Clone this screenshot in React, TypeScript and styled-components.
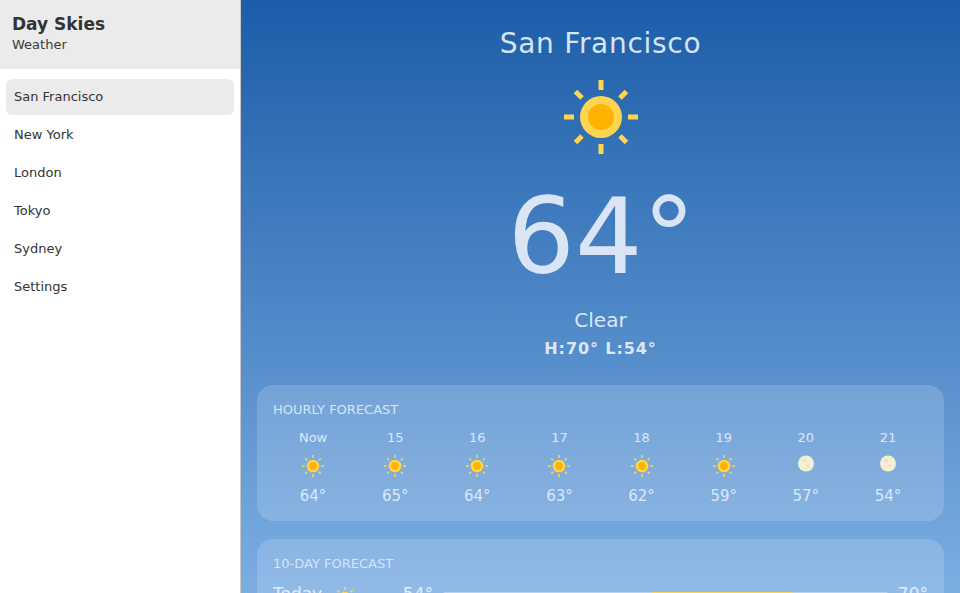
import React from 'react';
import styled, { createGlobalStyle } from 'styled-components';

const Global = createGlobalStyle`
  html, body { margin: 0; padding: 0; height: 100%; overflow: hidden; }
  body { font-family: "DejaVu Sans", Verdana, sans-serif; }
  * { box-sizing: border-box; }
`;
const Shell = styled.div`display: flex; width: 960px; height: 593px; overflow: hidden; background: #fff;`;
const Sidebar = styled.aside`width: 241px; flex: none; border-right: 1px solid #c8c8c8; background: #fff; display: flex; flex-direction: column;`;
const SideHeader = styled.header`height: 69px; background: #ebebeb; padding: 13px 12px 0;`;
const AppName = styled.div`font-size: 17px; font-weight: 700; color: #333; line-height: 22px;`;
const AppSub = styled.div`font-size: 13px; color: #3a3a3a; line-height: 20px;`;
const Nav = styled.nav`display: flex; flex-direction: column; gap: 2px; padding: 10px 6px;`;
const NavItem = styled.div<{ $active?: boolean }>`
  height: 36px; line-height: 36px; padding: 0 8px; font-size: 13px; color: #333; border-radius: 6px;
  background: ${p => (p.$active ? '#ebebeb' : 'transparent')};
`;
const Main = styled.main`
  flex: 1; min-width: 0; height: 593px; overflow: hidden; padding: 0 16px;
  background: linear-gradient(180deg, #1c5da8 0%, #7caee3 100%); color: #fff;
`;
const Hero = styled.section`display: flex; flex-direction: column; align-items: center; padding-top: 25px; height: 385px;`;
const City = styled.h1`margin: 0; font-size: 28px; font-weight: 400; line-height: 38px; color: #d6e4f5; letter-spacing: .7px;`;
const HeroIcon = styled.div`margin-top: 14px; height: 80px; line-height: 0;`;
const Temp = styled.div`font-size: 106px; line-height: 126px; color: #d9e5f4; margin-top: 17px; padding-left: 2px;`;
const Cond = styled.div`font-size: 20px; line-height: 26px; color: #d9e6f6; margin-top: 7px;`;
const HiLo = styled.div`font-size: 16px; font-weight: 700; line-height: 20px; color: #dbe7f6; margin-top: 6px; letter-spacing: .9px;`;
const Card = styled.section`background: rgba(255,255,255,.16); border-radius: 16px; padding: 16px 16px 15px; margin-bottom: 18px;`;
const CardTitle = styled.h2`margin: 0; font-size: 13px; font-weight: 400; line-height: 18px; color: #d6e4f6; text-transform: uppercase;`;
const Hours = styled.div`display: grid; grid-template-columns: repeat(8, 1fr); margin: 10px -1px 0;`;
const Hour = styled.div`display: flex; flex-direction: column; align-items: center;`;
const HourLabel = styled.div`font-size: 13px; line-height: 18px; color: #dbe7f6;`;
const HourIcon = styled.div`height: 24px; margin-top: 7px; line-height: 0;`;
const HourTemp = styled.div`font-size: 15px; line-height: 20px; color: #dbe7f6; margin-top: 8px;`;
const DayRow = styled.div`display: grid; grid-template-columns: 60px 28px 1fr 40px; align-items: center; height: 40px; margin-top: 1px;`;
const DayName = styled.div`font-size: 17px; color: #e1ebf8;`;
const DayIcon = styled.div`line-height: 0; margin-top: 8px;`;
const Range = styled.div`display: flex; align-items: center; gap: 10px;`;
const DayLow = styled.div`font-size: 17px; color: #e1ebf8; width: 72px; text-align: right;`;
const Track = styled.div`flex: 1; height: 4px; border-radius: 2px; background: rgba(255,255,255,.35); position: relative;`;
const Fill = styled.div`position: absolute; top: 0; bottom: 0; background: #ffd54f; border-radius: 2px;`;
const DayHigh = styled.div`font-size: 17px; color: #e1ebf8; text-align: right;`;

const Sun = ({ size }: { size: number }) => (
  <svg width={size} height={size} viewBox="0 0 80 80">
    <path
      stroke="#ffd54f"
      strokeWidth="5"
      d="M40 3v10M40 67v10M3 40h10M67 40h10M14.500 14.500l6.500 6.500M59 59l6.500 6.500M65.500 14.500l-6.500 6.500M21 59l-6.500 6.500"
    />
    <circle cx="40" cy="40" r="21" fill="#ffd54f" />
    <circle cx="40" cy="40" r="13" fill="#ffb300" />
  </svg>
);
const Moon = () => (
  <svg width="24" height="24" viewBox="0 0 24 24">
    <circle cx="12" cy="9.500" r="8" fill="#f5efcf" />
    <rect x="9.500" y="5.500" width="2" height="2" fill="#c9d9e6" />
    <rect x="13" y="10.500" width="2" height="2" fill="#d5dfe0" />
  </svg>
);

const hours: [string, string, boolean][] = [
  ['Now', '64°', true], ['15', '65°', true], ['16', '64°', true], ['17', '63°', true],
  ['18', '62°', true], ['19', '59°', true], ['20', '57°', false], ['21', '54°', false],
];
const days: [string, string, string, number, number][] = [
  ['Today', '54°', '70°', 46.7, 32], ['Tue', '53°', '68°', 40, 34], ['Wed', '52°', '67°', 35, 36],
];

export default function App() {
  return (
    <Shell>
      <Global />
      <Sidebar>
        <SideHeader><AppName>Day Skies</AppName><AppSub>Weather</AppSub></SideHeader>
        <Nav>
          {['San Francisco', 'New York', 'London', 'Tokyo', 'Sydney', 'Settings'].map((n, i) => (
            <NavItem key={n} $active={i === 0}>{n}</NavItem>
          ))}
        </Nav>
      </Sidebar>
      <Main>
        <Hero>
          <City>San Francisco</City>
          <HeroIcon><Sun size={80} /></HeroIcon>
          <Temp>64°</Temp>
          <Cond>Clear</Cond>
          <HiLo>H:70° L:54°</HiLo>
        </Hero>
        <Card>
          <CardTitle>Hourly Forecast</CardTitle>
          <Hours>
            {hours.map(([l, t, s]) => (
              <Hour key={l}>
                <HourLabel>{l}</HourLabel>
                <HourIcon>{s ? <Sun size={24} /> : <Moon />}</HourIcon>
                <HourTemp>{t}</HourTemp>
              </Hour>
            ))}
          </Hours>
        </Card>
        <Card>
          <CardTitle>10-Day Forecast</CardTitle>
          {days.map(([d, lo, hi, left, width]) => (
            <DayRow key={d}>
              <DayName>{d}</DayName>
              <DayIcon><Sun size={24} /></DayIcon>
              <Range>
                <DayLow>{lo}</DayLow>
                <Track><Fill style={{ left: `${left}%`, width: `${width}%` }} /></Track>
              </Range>
              <DayHigh>{hi}</DayHigh>
            </DayRow>
          ))}
        </Card>
      </Main>
    </Shell>
  );
}
